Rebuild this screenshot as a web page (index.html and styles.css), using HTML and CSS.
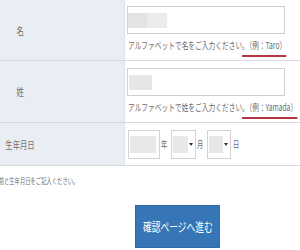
FILE: index.html
```html
<!DOCTYPE html>
<html lang="ja">

<head>
    <meta charset="UTF-8">
    <meta name="viewport" content="width=device-width, initial-scale=1.0">
    <title>お名前の入力</title>
    <link rel="stylesheet" href="styles.css">
</head>
<body>
    <div class="form">
        <div class="row row-first-name">
            <div class="label"><div class="label-text"><span class="sq">名</span></div></div>
            <div class="field">
                <div class="input">
                    <span class="mask mask-a"></span>
                    <span class="mask mask-b"></span>
                </div>
                <p class="help"><span class="sq">アルファベットで名をご入力ください<span class="example">。（例：Taro）</span></span></p>
            </div>
        </div>

        <div class="row row-last-name">
            <div class="label"><div class="label-text"><span class="sq">姓</span></div></div>
            <div class="field">
                <div class="input">
                    <span class="mask mask-c"></span>
                </div>
                <p class="help"><span class="sq">アルファベットで姓をご入力ください<span class="example">。（例：Yamada）</span></span></p>
            </div>
        </div>

        <div class="row row-birth">
            <div class="label"><div class="label-text"><span class="sq">生年月日</span></div></div>
            <div class="field field-date">
                <div class="select select-year"><span class="mask"></span></div>
                <div class="unit"><span class="sq">年</span></div>
                <div class="select select-month"><span class="mask"></span><span class="arrow"></span></div>
                <div class="unit"><span class="sq">月</span></div>
                <div class="select select-day"><span class="mask"></span><span class="arrow"></span></div>
                <div class="unit unit-day"><span class="sq">日</span></div>
            </div>
        </div>
    </div>

    <p class="note"><span class="sq">お名前と生年月日をご記入ください。</span></p>

    <div class="actions">
        <button class="submit" type="button"><span class="sq">確認ページへ進む</span></button>
    </div>
</body>

</html>
```

FILE: styles.css
```css
body {
    margin: 0;
    font-family: "Noto Sans CJK JP", "Noto Sans", sans-serif;
    color: #6d6d6d;
    background-color: #fff;
    overflow: hidden;
}

/* text in this form is drawn narrow */
.sq {
    display: inline-block;
    white-space: nowrap;
    transform: scaleX(0.7);
    transform-origin: 0 50%;
}

.form {
    width: 300px;
    overflow: hidden;
}

.row {
    display: flex;
    border-bottom: 1px solid #d5d9df;
}

.row-first-name {
    height: 60px;
}

.row-last-name {
    height: 61px;
}

.row-birth {
    height: 42px;
}

.label {
    width: 124px;
    flex: none;
    display: flex;
    align-items: center;
    background-color: #e9edf4;
    border-right: 1px solid #dde2e9;
    font-size: 10.5px;
    color: #707070;
}

.label-text {
    width: 40px;
    display: flex;
    justify-content: center;
}

.label-text .sq {
    transform-origin: 50% 50%;
}

.field {
    flex: 1;
    padding: 6px 0 0 2px;
}

.row-last-name .field {
    padding-top: 7px;
}

.input {
    width: 158px;
    height: 28px;
    box-sizing: border-box;
    border: 1px solid #cfcfcf;
    display: flex;
    align-items: center;
}

.mask {
    height: 15px;
    background-color: #e3e3e3;
}

.mask-a {
    width: 19px;
}

.mask-b {
    width: 20px;
    background-color: #ececec;
}

.mask-c {
    width: 23px;
    margin-left: 1px;
    background-color: #e6e6e6;
}

.help {
    margin: 5px 0 0 1px;
    font-size: 9.6px;
    line-height: 12px;
}

.example {
    display: inline-block;
    line-height: 12px;
    padding-bottom: 4px;
    border-bottom: 2px solid #b53443;
}

.field-date {
    display: flex;
    align-items: center;
    padding: 0 0 0 3px;
}

.select {
    height: 29px;
    box-sizing: border-box;
    border: 1px solid #d3d3d3;
    display: flex;
    align-items: center;
    gap: 1px;
    padding: 0 2px 0 1px;
    flex: none;
}

.select .mask {
    flex: 1;
    height: 17px;
    background-color: #e8e8e8;
}

.select-year {
    width: 32px;
    padding-right: 3px;
}

.select-month {
    width: 25px;
}

.select-day {
    width: 24px;
}

.arrow {
    width: 0;
    height: 0;
    border-left: 2px solid transparent;
    border-right: 2px solid transparent;
    border-top: 3px solid #333;
}

.unit {
    width: 11px;
    flex: none;
    box-sizing: border-box;
    padding-left: 1px;
    font-size: 9px;
}

.unit-day {
    padding-left: 2px;
}

.note {
    margin: 10px 0 0 -12px;
    font-size: 7.6px;
    line-height: 10px;
}

.actions {
    padding-left: 135px;
    margin-top: 19px;
}

.submit {
    width: 85px;
    height: 43px;
    padding: 0;
    display: flex;
    align-items: center;
    justify-content: center;
    background-color: #3675b6;
    border: 1px solid #2f6aa6;
    color: #fff;
    font-family: inherit;
    font-size: 12.5px;
}

.submit .sq {
    transform-origin: 50% 50%;
}
```
